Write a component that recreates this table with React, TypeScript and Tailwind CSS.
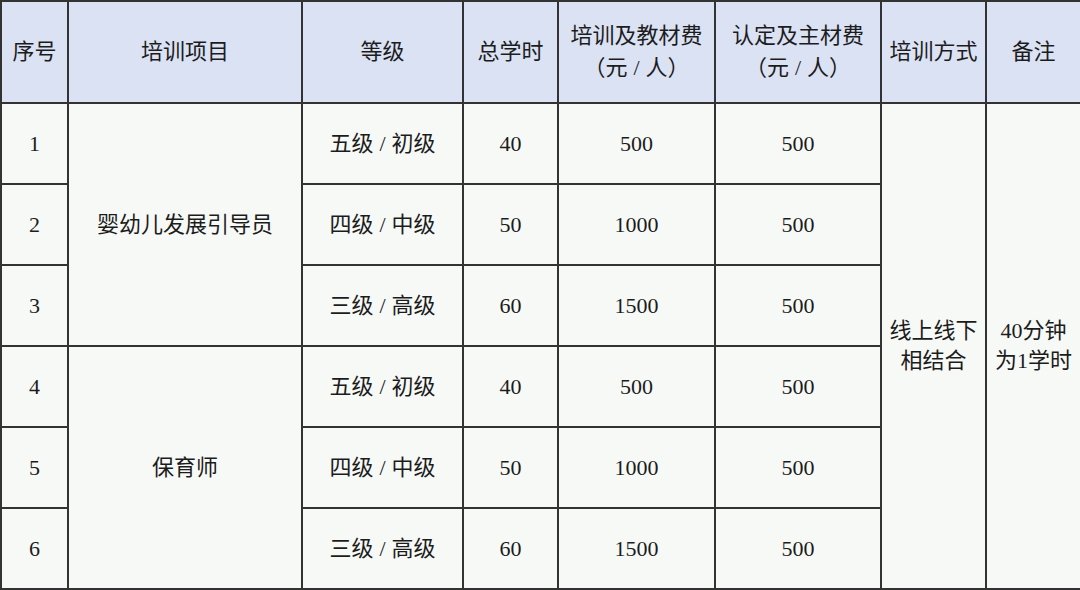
const rows = [
  { no: "1", level: ["五级", "初级"], hours: "40", fee: "500", cert: "500" },
  { no: "2", level: ["四级", "中级"], hours: "50", fee: "1000", cert: "500" },
  { no: "3", level: ["三级", "高级"], hours: "60", fee: "1500", cert: "500" },
  { no: "4", level: ["五级", "初级"], hours: "40", fee: "500", cert: "500" },
  { no: "5", level: ["四级", "中级"], hours: "50", fee: "1000", cert: "500" },
  { no: "6", level: ["三级", "高级"], hours: "60", fee: "1500", cert: "500" },
];

const cell = "border-2 border-[#333] text-center align-middle p-0";

function Slash() {
  return <span className="px-[6px]">/</span>;
}

export default function App() {
  return (
    <div
      className="w-[1080px] h-[590px] bg-white overflow-hidden text-[22px] text-[#1c1c1c] [text-spacing-trim:space-all]"
      style={{ fontFamily: '"Liberation Serif", "Noto Sans CJK SC", serif' }}
    >
      <table className="w-[1080px] table-fixed border-collapse bg-[#f7f9f7]">
        <colgroup>
          <col className="w-[67px]" />
          <col className="w-[234px]" />
          <col className="w-[161px]" />
          <col className="w-[95px]" />
          <col className="w-[157px]" />
          <col className="w-[166px]" />
          <col className="w-[105px]" />
          <col className="w-[95px]" />
        </colgroup>
        <thead>
          <tr className="h-[102px] bg-[#dbe2f4] leading-[32px]">
            <th className={`${cell} font-normal`}>序号</th>
            <th className={`${cell} font-normal`}>培训项目</th>
            <th className={`${cell} font-normal`}>等级</th>
            <th className={`${cell} font-normal`}>总学时</th>
            <th className={`${cell} font-normal`}>
              培训及教材费
              <br />
              （元<Slash />人）
            </th>
            <th className={`${cell} font-normal`}>
              认定及主材费
              <br />
              （元<Slash />人）
            </th>
            <th className={`${cell} font-normal`}>培训方式</th>
            <th className={`${cell} font-normal`}>备注</th>
          </tr>
        </thead>
        <tbody>
          {rows.map((r, i) => (
            <tr key={r.no} className="h-[81px]">
              <td className={cell}>{r.no}</td>
              {i === 0 && (
                <td rowSpan={3} className={cell}>
                  婴幼儿发展引导员
                </td>
              )}
              {i === 3 && (
                <td rowSpan={3} className={cell}>
                  保育师
                </td>
              )}
              <td className={cell}>
                {r.level[0]}
                <Slash />
                {r.level[1]}
              </td>
              <td className={cell}>{r.hours}</td>
              <td className={cell}>{r.fee}</td>
              <td className={cell}>{r.cert}</td>
              {i === 0 && (
                <>
                  <td rowSpan={6} className={`${cell} leading-[30px]`}>
                    线上线下
                    <br />
                    相结合
                  </td>
                  <td rowSpan={6} className={`${cell} leading-[30px]`}>
                    40分钟
                    <br />
                    为1学时
                  </td>
                </>
              )}
            </tr>
          ))}
        </tbody>
      </table>
    </div>
  );
}
